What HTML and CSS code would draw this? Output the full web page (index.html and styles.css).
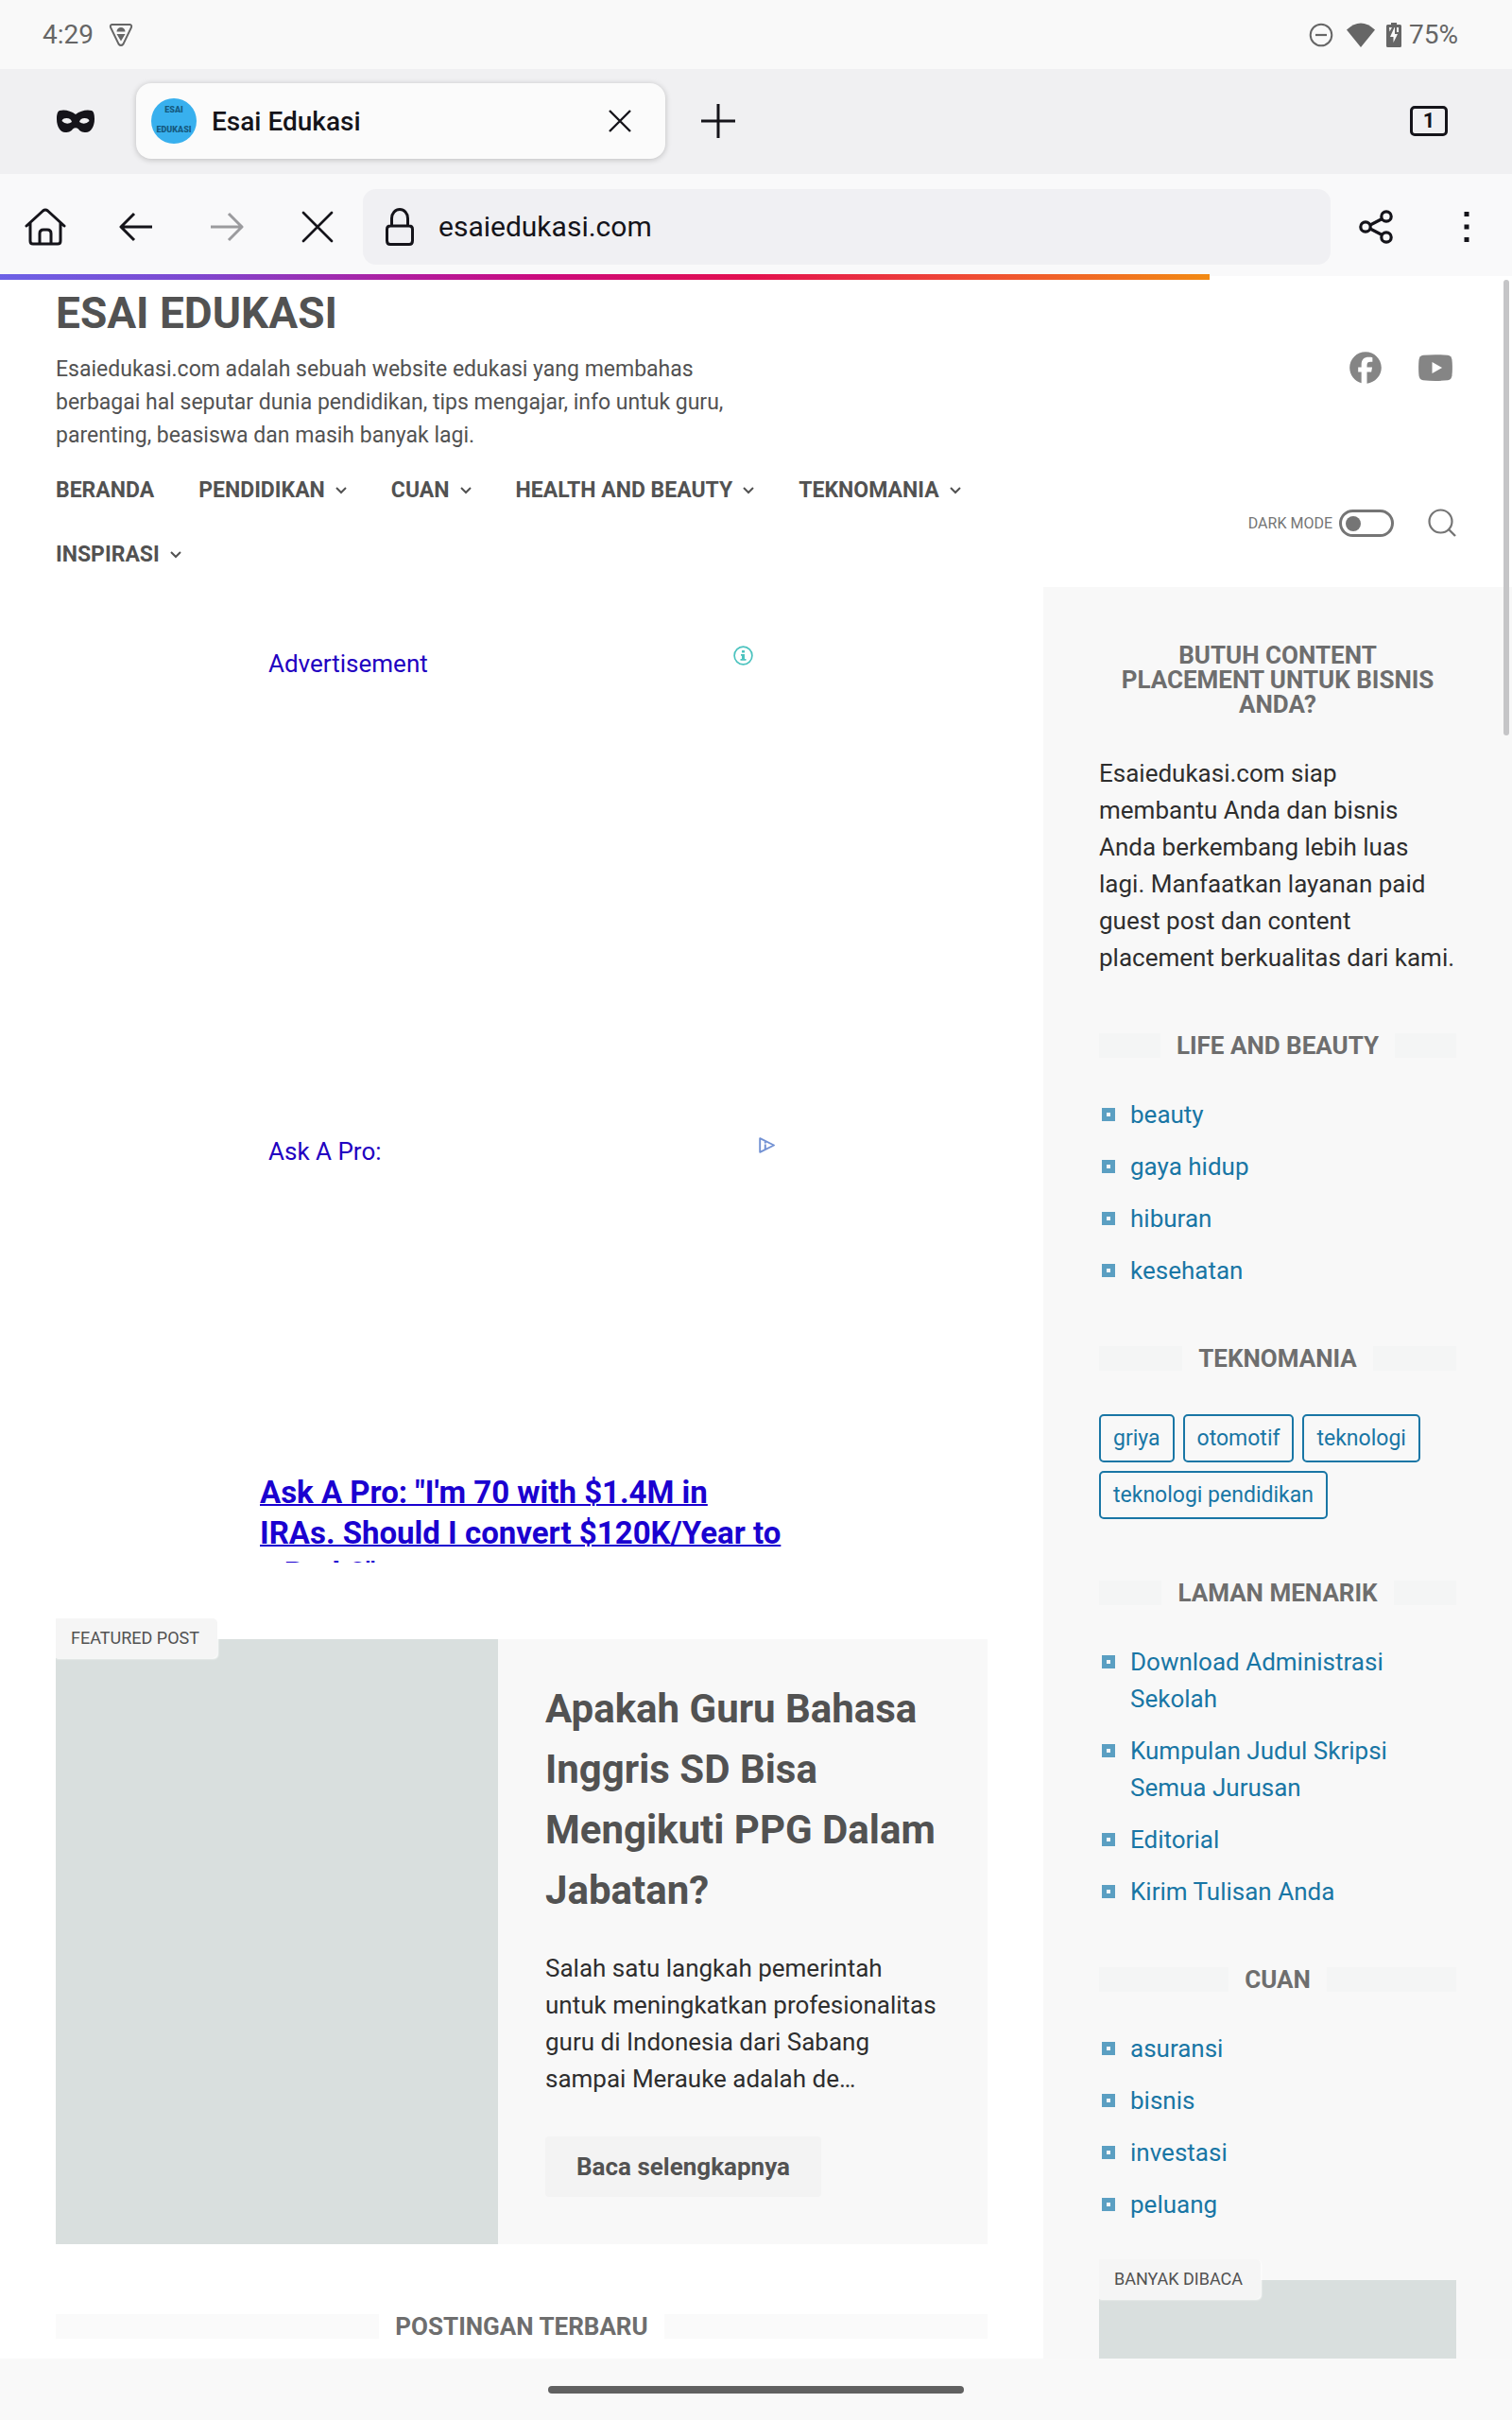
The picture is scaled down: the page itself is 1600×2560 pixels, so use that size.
FILE: index.html
```html
<!DOCTYPE html>
<html lang="id">
<head>
<meta charset="utf-8">
<meta name="viewport" content="width=device-width, initial-scale=1">
<title>Esai Edukasi</title>
<link rel="stylesheet" href="styles.css">
</head>
<body>
<div class="status-bar">
  <div class="status-group">
    <span>4:29</span>
    <svg class="status-shield" width="26" height="26" viewBox="0 0 26 26" aria-hidden="true"><path d="M3.500 2h19q2.200 0.300 1.500 3L15.500 22.500q-2.500 3-5 0L2 5q-0.700-2.700 1.500-3z" fill="none" stroke="#666" stroke-width="2"/><path d="M8.500 9.500a4.500 4.500 0 0 1 9 0zM8.500 12h9l-4.500 7.500z" fill="#666"/></svg>
  </div>
  <div class="status-group status-right">
    <svg width="26" height="26" viewBox="0 0 26 26" aria-hidden="true"><circle cx="13" cy="13" r="11.300" fill="none" stroke="#666" stroke-width="2"/><path d="M7 13h12" stroke="#666" stroke-width="2.200"/></svg>
    <svg class="status-wifi" width="30" height="26" viewBox="0 0 30 26" aria-hidden="true"><path d="M0 7.500Q15-6.500 30 7.500L15 26z" fill="#666"/></svg>
    <svg class="status-battery" width="16" height="26" viewBox="0 0 16 26" aria-hidden="true"><path d="M5 0h6v2h3.500Q16 2 16 3.500v21q0 1.500-1.500 1.500h-13Q0 26 0 24.500v-21Q0 2 1.500 2H5z" fill="#666"/><path d="M8.500 5L4 15h3.500v6L12 12H9V5z" fill="#f9f9f9"/><path d="M3 5h3L3.500 9.500zM11 5h2v5h-2z" fill="#f9f9f9"/></svg>
    <span>75%</span>
  </div>
</div>

<div class="tab-strip">
  <svg class="private-mask" width="40" height="24" viewBox="0 0 40 24" aria-hidden="true"><path fill-rule="evenodd" d="M3 1C8-.5 15 1 20 5 25 1 32-.5 37 1c2.500 1 3 5 3 9 0 8-4 14-9 14-4.500 0-6.500-1.500-8-3.500q-3-2.500-6 0C15.500 22.500 13.500 24 9 24 4 24 0 18 0 10 0 6 .5 2 3 1zM5.500 12q5 5 10.500 1-1-4-5.500-4t-5 3zM34.500 12q-5 5-10.500 1 1-4 5.500-4t5 3z" fill="#15141a"/></svg>
  <div class="tab">
    <svg width="48" height="48" viewBox="0 0 48 48" aria-hidden="true"><circle cx="24" cy="24" r="24" fill="#38b0ee"/><text x="24" y="15" class="favicon-text">ESAI</text><text x="24" y="36" class="favicon-text">EDUKASI</text></svg>
    <span class="tab-title">Esai Edukasi</span>
    <button class="tab-close" type="button" aria-label="Close tab"><svg width="24" height="24" viewBox="0 0 24 24"><path d="M1 1l22 22M23 1L1 23" stroke="#15141a" stroke-width="2.400" fill="none"/></svg></button>
  </div>
  <button class="new-tab" type="button" aria-label="New tab"><svg width="36" height="36" viewBox="0 0 36 36"><path d="M18 0v36M0 18h36" stroke="#15141a" stroke-width="3"/></svg></button>
  <button class="tab-count" type="button" aria-label="Open tabs">1</button>
</div>

<div class="toolbar">
  <button class="tool" type="button" aria-label="Home"><svg width="44" height="40" viewBox="0 0 44 40"><path d="M2 19L19.500 3Q22 1 24.500 3L42 19M6 16v19q0 3 3 3h26q3 0 3-3V16M16 38V27q0-4 4-4h4q4 0 4 4v11" fill="none" stroke="#15141a" stroke-width="3" stroke-linecap="round" stroke-linejoin="round"/></svg></button>
  <button class="tool" type="button" aria-label="Back"><svg width="36" height="32" viewBox="0 0 36 32"><path d="M16 2L2 16l14 14M2 16h33" fill="none" stroke="#15141a" stroke-width="3" stroke-linejoin="round"/></svg></button>
  <button class="tool" type="button" aria-label="Forward" disabled><svg width="36" height="32" viewBox="0 0 36 32"><path d="M20 2l14 14-14 14M34 16H1" fill="none" stroke="#9b9b9e" stroke-width="3" stroke-linejoin="round"/></svg></button>
  <button class="tool" type="button" aria-label="Stop"><svg width="34" height="34" viewBox="0 0 34 34"><path d="M2 2l30 30M32 2L2 32" fill="none" stroke="#15141a" stroke-width="2.600" stroke-linecap="round"/></svg></button>
  <div class="url-field">
    <svg width="30" height="40" viewBox="0 0 30 40" aria-hidden="true"><path d="M6.500 19v-8a8.500 9.500 0 0 1 17 0v8M5 19h20q3.500 0 3.500 3.500v12q0 4-3.500 4H5q-3.500 0-3.500-4v-12Q1.500 19 5 19z" fill="none" stroke="#15141a" stroke-width="3"/></svg>
    <input class="url-input" type="text" value="esaiedukasi.com" aria-label="Address">
  </div>
  <button class="tool" type="button" aria-label="Share"><svg width="36" height="36" viewBox="0 0 36 36"><g fill="none" stroke="#15141a" stroke-width="3.200"><circle cx="7" cy="18" r="5.200"/><circle cx="29" cy="7" r="5.200"/><circle cx="29" cy="29" r="5.200"/><path d="M12 16l12.500-6.500M12 20l12.500 6.500"/></g></svg></button>
  <button class="tool" type="button" aria-label="Menu"><svg width="6" height="34" viewBox="0 0 6 34"><path d="M.5 1h5v5h-5zM.5 14.500h5v5h-5zM.5 28h5v5h-5z" fill="#15141a"/></svg></button>
</div>

<div class="viewport">
  <div class="load-progress"></div>
  <div class="scroll-thumb"></div>
  <header class="site-header">
    <div class="header-row">
      <div class="brand">
        <h1 class="site-title">ESAI EDUKASI</h1>
        <p class="site-about">Esaiedukasi.com adalah sebuah website edukasi yang membahas berbagai hal seputar dunia pendidikan, tips mengajar, info untuk guru, parenting, beasiswa dan masih banyak lagi.</p>
      </div>
      <div class="social">
        <a href="#" aria-label="Facebook"><svg width="36" height="36" viewBox="0 0 24 24"><path d="M12 .8C5.800.8.8 5.800.8 12c0 5.200 3.500 9.500 8.300 10.800V15H6.800v-3.400h2.300V10c0-3.800 1.700-5.500 5.400-5.500.7 0 1.900.1 2.400.3v3.100c-.3 0-.7 0-1.300 0-1.900 0-2.600.7-2.600 2.500v1.200h3.700l-.6 3.400H13v8.100c5.700-.7 10.200-5.500 10.200-11.100C23.200 5.800 18.200.8 12 .8z" fill="#858585"/></svg></a>
        <a href="#" aria-label="YouTube"><svg width="36" height="28" viewBox="0 0 36 28"><path d="M5 .8Q18-.5 31 .8q4 .5 4.500 5 .8 8 0 16.500-.5 4.500-4.500 5-13 1.200-26 0-4-.5-4.500-5-.8-8.500 0-16.500Q1 1.300 5 .8z" fill="#858585"/><path d="M14.500 8v12l10.500-6z" fill="#fff"/></svg></a>
      </div>
    </div>
    <div class="header-row">
      <nav class="site-nav">
        <a href="#">BERANDA</a>
        <a href="#">PENDIDIKAN<svg class="chevron" viewBox="0 0 12 12"><path d="M1 3l5 5 5-5"/></svg></a>
        <a href="#">CUAN<svg class="chevron" viewBox="0 0 12 12"><path d="M1 3l5 5 5-5"/></svg></a>
        <a href="#">HEALTH AND BEAUTY<svg class="chevron" viewBox="0 0 12 12"><path d="M1 3l5 5 5-5"/></svg></a>
        <a href="#">TEKNOMANIA<svg class="chevron" viewBox="0 0 12 12"><path d="M1 3l5 5 5-5"/></svg></a>
        <a href="#">INSPIRASI<svg class="chevron" viewBox="0 0 12 12"><path d="M1 3l5 5 5-5"/></svg></a>
      </nav>
      <div class="site-tools">
        <label class="dark-label" for="dark-mode">DARK MODE</label>
        <input class="dark-switch" id="dark-mode" type="checkbox">
        <button class="search-button" type="button" aria-label="Search"><svg width="30" height="30" viewBox="0 0 30 30"><circle cx="13.500" cy="13.500" r="12" fill="none" stroke="#757575" stroke-width="2.200"/><path d="M22 22l7 7" stroke="#757575" stroke-width="2.400"/></svg></button>
      </div>
    </div>
  </header>

  <div class="columns">
    <main class="content">
      <section class="ad ad-first">
        <a class="ad-name" href="#">Advertisement</a>
        <svg width="21" height="21" viewBox="0 0 21 21" aria-hidden="true"><circle cx="10.500" cy="10.500" r="9.400" fill="none" stroke="#4cc3bf" stroke-width="1.700"/><path d="M9 5h3v2.600H9zM8 9h4v5h1.500v1.800h-6V14H9v-3.300H8z" fill="#4cc3bf"/></svg>
      </section>
      <section class="ad ad-second">
        <a class="ad-name" href="#">Ask A Pro:</a>
        <svg width="17" height="17" viewBox="0 0 17 17" aria-hidden="true"><path d="M1.200 1.200v14.600L16 8.500z" fill="none" stroke="#7291d3" stroke-width="1.900" stroke-linejoin="round"/><path d="M5.800 7.500h2V13h-2zM5.800 4.500h2v2h-2z" fill="#7291d3"/></svg>
      </section>
      <a class="ad-headline" href="#">Ask A Pro: "I'm 70 with $1.4M in IRAs. Should I convert $120K/Year to a Roth?"</a>

      <article class="featured">
        <span class="label">FEATURED POST</span>
        <div class="thumb"></div>
        <div class="featured-body">
          <h2 class="featured-title">Apakah Guru Bahasa Inggris SD Bisa Mengikuti PPG Dalam Jabatan?</h2>
          <p class="body-text">Salah satu langkah pemerintah untuk meningkatkan profesionalitas guru di Indonesia dari Sabang sampai Merauke adalah de…</p>
          <a class="read-more" href="#">Baca selengkapnya</a>
        </div>
      </article>
      <h2 class="section-title section-title-main">POSTINGAN TERBARU</h2>
    </main>

    <aside class="sidebar">
      <section class="widget">
        <h3 class="widget-title">BUTUH CONTENT PLACEMENT UNTUK BISNIS ANDA?</h3>
        <p class="body-text">Esaiedukasi.com siap membantu Anda dan bisnis Anda berkembang lebih luas lagi. Manfaatkan layanan paid guest post dan content placement berkualitas dari kami.</p>
      </section>
      <section class="widget">
        <h3 class="section-title">LIFE AND BEAUTY</h3>
        <ul class="link-list">
          <li><a href="#">beauty</a></li>
          <li><a href="#">gaya hidup</a></li>
          <li><a href="#">hiburan</a></li>
          <li><a href="#">kesehatan</a></li>
        </ul>
      </section>
      <section class="widget">
        <h3 class="section-title">TEKNOMANIA</h3>
        <div class="tags">
          <a href="#">griya</a>
          <a href="#">otomotif</a>
          <a href="#">teknologi</a>
          <a href="#">teknologi pendidikan</a>
        </div>
      </section>
      <section class="widget">
        <h3 class="section-title">LAMAN MENARIK</h3>
        <ul class="link-list">
          <li><a href="#">Download Administrasi Sekolah</a></li>
          <li><a href="#">Kumpulan Judul Skripsi Semua Jurusan</a></li>
          <li><a href="#">Editorial</a></li>
          <li><a href="#">Kirim Tulisan Anda</a></li>
        </ul>
      </section>
      <section class="widget">
        <h3 class="section-title">CUAN</h3>
        <ul class="link-list">
          <li><a href="#">asuransi</a></li>
          <li><a href="#">bisnis</a></li>
          <li><a href="#">investasi</a></li>
          <li><a href="#">peluang</a></li>
        </ul>
      </section>
      <section class="widget popular">
        <span class="label">BANYAK DIBACA</span>
        <div class="thumb popular-thumb"></div>
      </section>
    </aside>
  </div>
</div>
<div class="gesture-bar"><div class="gesture-pill"></div></div>
</body>
</html>
```
FILE: styles.css
```css
*, *::before, *::after { box-sizing: border-box; }

body {
  margin: 0;
  height: 100vh;
  display: flex;
  flex-direction: column;
  overflow: hidden;
  background: #fff;
  color: #2e2e2e;
  font-family: Roboto, "Liberation Sans", sans-serif;
  font-size: 26px;
  line-height: 39px;
}

h1, h2, h3, p, ul { margin: 0; padding: 0; }
ul { list-style: none; }
a { color: inherit; text-decoration: none; }
svg { display: block; flex: none; }
button {
  display: flex;
  align-items: center;
  justify-content: center;
  padding: 0;
  border: 0;
  background: none;
  color: inherit;
  font: inherit;
}

/* Device status bar */
.status-bar {
  flex: none;
  height: 73px;
  padding: 0 57px 0 45px;
  display: flex;
  align-items: center;
  justify-content: space-between;
  background: #f9f9f9;
  color: #666;
  font-size: 28px;
}
.status-group { display: flex; align-items: center; gap: 16px; }
.status-right { gap: 8px; }
.status-wifi { margin: 0 4px 0 6px; }

/* Tab strip */
.tab-strip {
  flex: none;
  height: 111px;
  padding: 0 68px 1px 60px;
  display: flex;
  align-items: center;
  background: #f0f0f2;
  color: #15141a;
}
.tab {
  width: 560px;
  height: 80px;
  margin: 0 38px 0 44px;
  padding: 0 36px 0 16px;
  display: flex;
  align-items: center;
  gap: 16px;
  border-radius: 16px;
  background: #fbfbfb;
  box-shadow: 0 1px 6px rgba(0, 0, 0, 0.22);
}
.favicon-text {
  font-family: Roboto, sans-serif;
  font-size: 9px;
  font-weight: 900;
  text-anchor: middle;
  fill: #155a80;
}
.tab-title { flex: 1; font-size: 28px; font-weight: 500; }
.tab-count {
  width: 40px;
  height: 32px;
  margin-left: auto;
  border: 3px solid #15141a;
  border-radius: 5px;
  font-size: 22px;
  font-weight: 700;
  line-height: 26px;
}

/* Address toolbar */
.toolbar {
  flex: none;
  height: 108px;
  padding-top: 3px;
  display: flex;
  align-items: center;
  background: #f9f9fa;
}
.tool { flex: none; width: 96px; height: 80px; }
.url-field {
  flex: 1;
  height: 80px;
  padding: 0 24px;
  display: flex;
  align-items: center;
  gap: 26px;
  border-radius: 14px;
  background: #f0f0f3;
}
.url-input {
  flex: 1;
  min-width: 0;
  padding: 0;
  border: 0;
  outline: 0;
  background: transparent;
  color: #15141a;
  font: 30px/40px Roboto, "Liberation Sans", sans-serif;
}

/* Web page area */
.viewport {
  position: relative;
  flex: 1;
  min-height: 0;
  display: flex;
  flex-direction: column;
}
.load-progress {
  position: absolute;
  top: -2px;
  left: 0;
  width: 80%;
  height: 6px;
  background: linear-gradient(90deg, #6d62e6 0%, #7e48d0 16%, #b5199a 35%, #cc0a7c 45%, #e3104f 62%, #ef4a34 80%, #f28a13 100%);
}
.scroll-thumb {
  position: absolute;
  top: 4px;
  right: 3px;
  width: 6px;
  height: 482px;
  border-radius: 3px;
  background: #c5c5c7;
}

.site-header { flex: none; padding: 12px 59px 0; color: #525252; }
.header-row { display: flex; align-items: center; justify-content: space-between; }
.brand { flex: 0 1 50%; }
.site-title { font-size: 46px; line-height: 54px; }
.site-about { margin: 15px 0 7px; font-size: 23px; line-height: 35px; }
.social { display: flex; align-items: center; gap: 38px; padding: 0 4px 12px 0; }

.site-nav {
  flex: 0 1 70%;
  display: flex;
  flex-wrap: wrap;
  column-gap: 47px;
  font-size: 23px;
  font-weight: 700;
  line-height: 68px;
}
.site-nav a { display: flex; align-items: center; gap: 11px; }
.chevron {
  width: 12px;
  height: 12px;
  fill: none;
  stroke: #525252;
  stroke-width: 2px;
}
.site-tools { display: flex; align-items: center; color: #757575; }
.dark-label { margin-right: 7px; font-size: 16px; }
.dark-switch {
  appearance: none;
  width: 58px;
  height: 29px;
  margin: 0 36px 0 0;
  padding: 4px;
  border: 3px solid #757575;
  border-radius: 15px;
}
.dark-switch::before {
  content: "";
  display: block;
  width: 16px;
  height: 16px;
  border-radius: 50%;
  background: #757575;
}

.columns {
  flex: 1;
  min-height: 0;
  overflow: hidden;
  display: grid;
  grid-template-columns: 69% 31%;
}
.content { padding: 59px 59px 0; }

/* Advertisements */
.ad {
  max-width: 552px;
  margin: 0 auto;
  padding: 3px 8px 0;
  display: flex;
  align-items: flex-start;
  justify-content: space-between;
  color: #2200c1;
}
.ad-first { height: 516px; padding-right: 31px; }
.ad-second { height: 361px; }
.ad-second svg { margin-top: 4px; }
.ad-headline {
  display: block;
  max-width: 554px;
  height: 96px;
  margin: 0 auto 81px;
  overflow: hidden;
  color: #1a00d0;
  font-size: 33px;
  font-weight: 700;
  line-height: 43px;
  text-decoration: underline;
  text-decoration-thickness: 2px;
}

/* Featured post */
.featured {
  position: relative;
  display: grid;
  grid-template-columns: 468fr 518fr;
  background: #f8f8f8;
}
.label {
  position: absolute;
  top: -22px;
  left: 0;
  padding: 0 19px 0 16px;
  border-radius: 0 5px 5px 0;
  background: #f5f5f5;
  box-shadow: 1px 1px 2px #fff;
  color: #525252;
  font-size: 18px;
  line-height: 42px;
}
.thumb { background: #d9dfde; }
.featured-body { padding: 42px 48px 50px 50px; }
.featured-title { margin-bottom: 31px; color: #525252; font-size: 42px; line-height: 64px; }
.read-more {
  display: inline-block;
  margin-top: 41px;
  padding: 0 33px;
  border-radius: 4px;
  background: #f3f3f3;
  color: #525252;
  font-weight: 700;
  line-height: 64px;
  vertical-align: top;
}

/* Headings with a bar on each side */
.section-title {
  display: flex;
  align-items: center;
  gap: 17px;
  margin-bottom: 41px;
  color: #6e6e6e;
  font-size: 26px;
  line-height: 26px;
}
.section-title::before,
.section-title::after {
  content: "";
  flex: 1;
  height: 26px;
  background: #f4f5f5;
}
.section-title-main { margin-top: 74px; }
.section-title-main::before,
.section-title-main::after { background: #fafafa; }

/* Sidebar */
.sidebar {
  padding: 59px 59px 0;
  display: flex;
  flex-direction: column;
  gap: 60px;
  background: #f8f8f8;
}
.widget-title {
  margin-bottom: 41px;
  padding: 0 20px;
  color: #6e6e6e;
  font-size: 26px;
  line-height: 26px;
  text-align: center;
}
.link-list { display: flex; flex-direction: column; gap: 16px; color: #1976a5; }
.link-list li { display: flex; gap: 16px; padding-left: 3px; }
.link-list li::before {
  content: "";
  flex: none;
  width: 14px;
  height: 14px;
  margin-top: 12px;
  border: 5px solid #5b9fc2;
}
.tags { display: flex; flex-wrap: wrap; gap: 9px; padding: 5px 0; }
.tags a {
  padding: 0 13px;
  border: 2px solid #1976a5;
  border-radius: 5px;
  color: #1976a5;
  font-size: 23px;
  line-height: 47px;
}
.popular { position: relative; }
.popular-thumb { height: 214px; }

/* Gesture navigation */
.gesture-bar {
  flex: none;
  height: 65px;
  display: flex;
  align-items: center;
  justify-content: center;
  background: #f9f9f9;
}
.gesture-pill { width: 440px; height: 8px; border-radius: 4px; background: #616161; }
```
